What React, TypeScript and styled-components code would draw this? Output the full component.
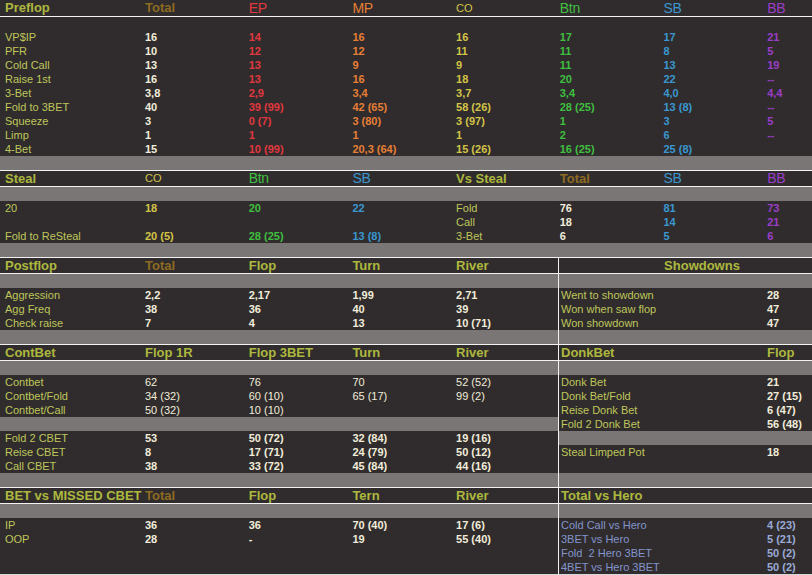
import React from 'react';
import styled, { createGlobalStyle } from 'styled-components';

const C = {
  bg: '#302c2d',
  gray: '#7a7676',
  line: '#f2f2f2',
  head: '#adb83e',
  label: '#bfc65a',
  val: '#f1edda',
  total: '#8d6b22',
  ep: '#e0383e',
  mp: '#e67f36',
  co: '#d3c448',
  btn: '#3fbf3f',
  sb: '#3a97cf',
  bb: '#9a3ec8',
  hero: '#8395cc',
  heroVal: '#9aaad6',
};

const FULL = '140px repeat(6, 103.7px) 1fr';
const LEFT = '140px repeat(3, 103.7px) 1fr';
const RIGHT = '203px 1fr';

const GlobalStyle = createGlobalStyle`
  html, body {
    margin: 0;
    padding: 0;
    background: ${C.bg};
    overflow: hidden;
  }
  body {
    font-family: "Liberation Sans", Arial, sans-serif;
  }
`;

const Page = styled.div`
  width: 812px;
  background: ${C.bg};
  border-bottom: 1px solid #d8d8d8;
`;

const Section = styled.div`
  display: flex;
`;

const Panel = styled.div<{ $side?: boolean }>`
  display: flex;
  flex-direction: column;
  ${(p) => (p.$side ? `width: 253px; border-left: 1px solid ${C.line};` : 'flex: 1;')}
`;

const HeaderRow = styled.div<{ $cols: string; $first?: boolean; $side?: boolean }>`
  display: grid;
  grid-template-columns: ${(p) => p.$cols};
  height: ${(p) => (p.$first ? 16 : 15)}px;
  line-height: ${(p) => (p.$first ? 16 : 15)}px;
  border-top: ${(p) => (p.$first ? 'none' : `1px solid ${C.line}`)};
  border-bottom: 1px solid ${C.line};
  font-size: 13px;
  font-weight: bold;

  & > span {
    padding-left: 5px;
  }
  ${(p) => (p.$side ? '& > span:first-child { padding-left: 2px; }' : '')}
`;

type Kind = 'pos' | 'small' | undefined;

const HeadCell = styled.span<{ $color: string; $center?: boolean; $kind?: Kind }>`
  color: ${(p) => p.$color};
  white-space: nowrap;
  ${(p) => (p.$kind === 'pos' ? 'font-weight: normal; font-size: 14px; letter-spacing: -0.3px;' : '')}
  ${(p) => (p.$kind === 'small' ? 'font-weight: normal; font-size: 11px;' : '')}
  ${(p) => (p.$center ? 'grid-column: 1 / -1; text-align: center; padding-left: 33px !important;' : '')}
`;

const Spacer = styled.div<{ $dark?: boolean }>`
  height: ${(p) => (p.$dark ? 13 : 14)}px;
  background: ${(p) => (p.$dark ? C.bg : C.gray)};
`;

const Row = styled.div<{ $cols: string; $side?: boolean }>`
  display: grid;
  grid-template-columns: ${(p) => p.$cols};
  height: 14px;
  line-height: 14px;
  font-size: 11px;

  & > span {
    padding-left: 5px;
  }
  ${(p) => (p.$side ? '& > span:first-child { padding-left: 2px; }' : '')}
`;

const Cell = styled.span<{ $color: string; $bold?: boolean }>`
  color: ${(p) => p.$color};
  font-weight: ${(p) => (p.$bold ? 'bold' : 'normal')};
  white-space: pre;
`;

type Head = [string, string, Kind?];

const Header = ({ cols, items, first, side }: { cols: string; items: Head[]; first?: boolean; side?: boolean }) => (
  <HeaderRow $cols={cols} $first={first} $side={side}>
    {items.map(([t, c, k], i) => (
      <HeadCell key={i} $color={c} $kind={k}>
        {t}
      </HeadCell>
    ))}
  </HeaderRow>
);

type RowsProps = {
  cols: string;
  colors: string[];
  rows: string[][];
  bold?: boolean;
  side?: boolean;
};

const Rows = ({ cols, colors, rows, bold = true, side }: RowsProps) => (
  <>
    {rows.map((r, ri) => (
      <Row key={ri} $cols={cols} $side={side}>
        {r.map((t, i) => (
          <Cell key={i} $color={colors[i]} $bold={bold && colors[i] !== C.label && colors[i] !== C.hero}>
            {t}
          </Cell>
        ))}
      </Row>
    ))}
  </>
);

const preflop = [
  ['VP$IP', '16', '14', '16', '16', '17', '17', '21'],
  ['PFR', '10', '12', '12', '11', '11', '8', '5'],
  ['Cold Call', '13', '13', '9', '9', '11', '13', '19'],
  ['Raise 1st', '16', '13', '16', '18', '20', '22', '--'],
  ['3-Bet', '3,8', '2,9', '3,4', '3,7', '3,4', '4,0', '4,4'],
  ['Fold to 3BET', '40', '39 (99)', '42 (65)', '58 (26)', '28 (25)', '13 (8)', '--'],
  ['Squeeze', '3', '0 (7)', '3 (80)', '3 (97)', '1', '3', '5'],
  ['Limp', '1', '1', '1', '1', '2', '6', '--'],
  ['4-Bet', '15', '10 (99)', '20,3 (64)', '15 (26)', '16 (25)', '25 (8)', ''],
];

const steal = [
  ['20', '18', '20', '22', 'Fold', '76', '81', '73'],
  ['', '', '', '', 'Call', '18', '14', '21'],
  ['Fold to ReSteal', '20 (5)', '28 (25)', '13 (8)', '3-Bet', '6', '5', '6'],
];

const postflop = [
  ['Aggression', '2,2', '2,17', '1,99', '2,71'],
  ['Agg Freq', '38', '36', '40', '39'],
  ['Check raise', '7', '4', '13', '10 (71)'],
];

const showdowns = [
  ['Went to showdown', '28'],
  ['Won when saw flop', '47'],
  ['Won showdown', '47'],
];

const contbetA = [
  ['Contbet', '62', '76', '70', '52 (52)'],
  ['Contbet/Fold', '34 (32)', '60 (10)', '65 (17)', '99 (2)'],
  ['Contbet/Call', '50 (32)', '10 (10)', '', ''],
];

const contbetB = [
  ['Fold 2 CBET', '53', '50 (72)', '32 (84)', '19 (16)'],
  ['Reise CBET', '8', '17 (71)', '24 (79)', '50 (12)'],
  ['Call CBET', '38', '33 (72)', '45 (84)', '44 (16)'],
];

const donk = [
  ['Donk Bet', '21'],
  ['Donk Bet/Fold', '27 (15)'],
  ['Reise Donk Bet', '6 (47)'],
  ['Fold 2 Donk Bet', '56 (48)'],
];

const missed = [
  ['IP', '36', '36', '70 (40)', '17 (6)'],
  ['OOP', '28', '-', '19', '55 (40)'],
  ['', '', '', '', ''],
  ['', '', '', '', ''],
];

const hero = [
  ['Cold Call vs Hero', '4 (23)'],
  ['3BET vs Hero', '5 (21)'],
  ['Fold  2 Hero 3BET', '50 (2)'],
  ['4BET vs Hero 3BET', '50 (2)'],
];

const leftVals = [C.label, C.val, C.val, C.val, C.val];
const sideVals = [C.label, C.val];

const App = () => (
  <>
    <GlobalStyle />
    <Page>
      <Header
        first
        cols={FULL}
        items={[
          ['Preflop', C.head],
          ['Total', C.total],
          ['EP', C.ep, 'pos'],
          ['MP', C.mp, 'pos'],
          ['CO', C.co, 'small'],
          ['Btn', C.btn, 'pos'],
          ['SB', C.sb, 'pos'],
          ['BB', C.bb, 'pos'],
        ]}
      />
      <Spacer $dark />
      <Rows cols={FULL} colors={[C.label, C.val, C.ep, C.mp, C.co, C.btn, C.sb, C.bb]} rows={preflop} />
      <Spacer />

      <Header
        cols={FULL}
        items={[
          ['Steal', C.head],
          ['CO', C.co, 'small'],
          ['Btn', C.btn, 'pos'],
          ['SB', C.sb, 'pos'],
          ['Vs Steal', C.head],
          ['Total', C.total],
          ['SB', C.sb, 'pos'],
          ['BB', C.bb, 'pos'],
        ]}
      />
      <Spacer />
      <Rows cols={FULL} colors={[C.label, C.co, C.btn, C.sb, C.label, C.val, C.sb, C.bb]} rows={steal} />
      <Spacer />

      <Section>
        <Panel>
          <Header
            cols={LEFT}
            items={[
              ['Postflop', C.head],
              ['Total', C.total],
              ['Flop', C.head],
              ['Turn', C.head],
              ['River', C.head],
            ]}
          />
          <Spacer />
          <Rows cols={LEFT} colors={leftVals} rows={postflop} />
          <Spacer />
        </Panel>
        <Panel $side>
          <HeaderRow $cols={RIGHT} $side>
            <HeadCell $color={C.head} $center>
              Showdowns
            </HeadCell>
          </HeaderRow>
          <Spacer />
          <Rows side cols={RIGHT} colors={sideVals} rows={showdowns} />
          <Spacer />
        </Panel>
      </Section>

      <Section>
        <Panel>
          <Header
            cols={LEFT}
            items={[
              ['ContBet', C.head],
              ['Flop 1R', C.head],
              ['Flop 3BET', C.head],
              ['Turn', C.head],
              ['River', C.head],
            ]}
          />
          <Spacer />
          <Rows cols={LEFT} colors={leftVals} rows={contbetA} bold={false} />
          <Spacer />
          <Rows cols={LEFT} colors={leftVals} rows={contbetB} />
          <Spacer />
        </Panel>
        <Panel $side>
          <Header
            side
            cols={RIGHT}
            items={[
              ['DonkBet', C.head],
              ['Flop', C.head],
            ]}
          />
          <Spacer />
          <Rows side cols={RIGHT} colors={sideVals} rows={donk} />
          <Spacer />
          <Rows
            side
            cols={RIGHT}
            colors={sideVals}
            rows={[
              ['Steal Limped Pot', '18'],
              ['', ''],
            ]}
          />
          <Spacer />
        </Panel>
      </Section>

      <Section>
        <Panel>
          <Header
            cols={LEFT}
            items={[
              ['BET vs MISSED CBET', C.head],
              ['Total', C.total],
              ['Flop', C.head],
              ['Tern', C.head],
              ['River', C.head],
            ]}
          />
          <Spacer />
          <Rows cols={LEFT} colors={leftVals} rows={missed} />
        </Panel>
        <Panel $side>
          <Header side cols={RIGHT} items={[['Total vs Hero', C.head]]} />
          <Spacer />
          <Rows side cols={RIGHT} colors={[C.hero, C.heroVal]} rows={hero} />
        </Panel>
      </Section>
    </Page>
  </>
);

export default App;
